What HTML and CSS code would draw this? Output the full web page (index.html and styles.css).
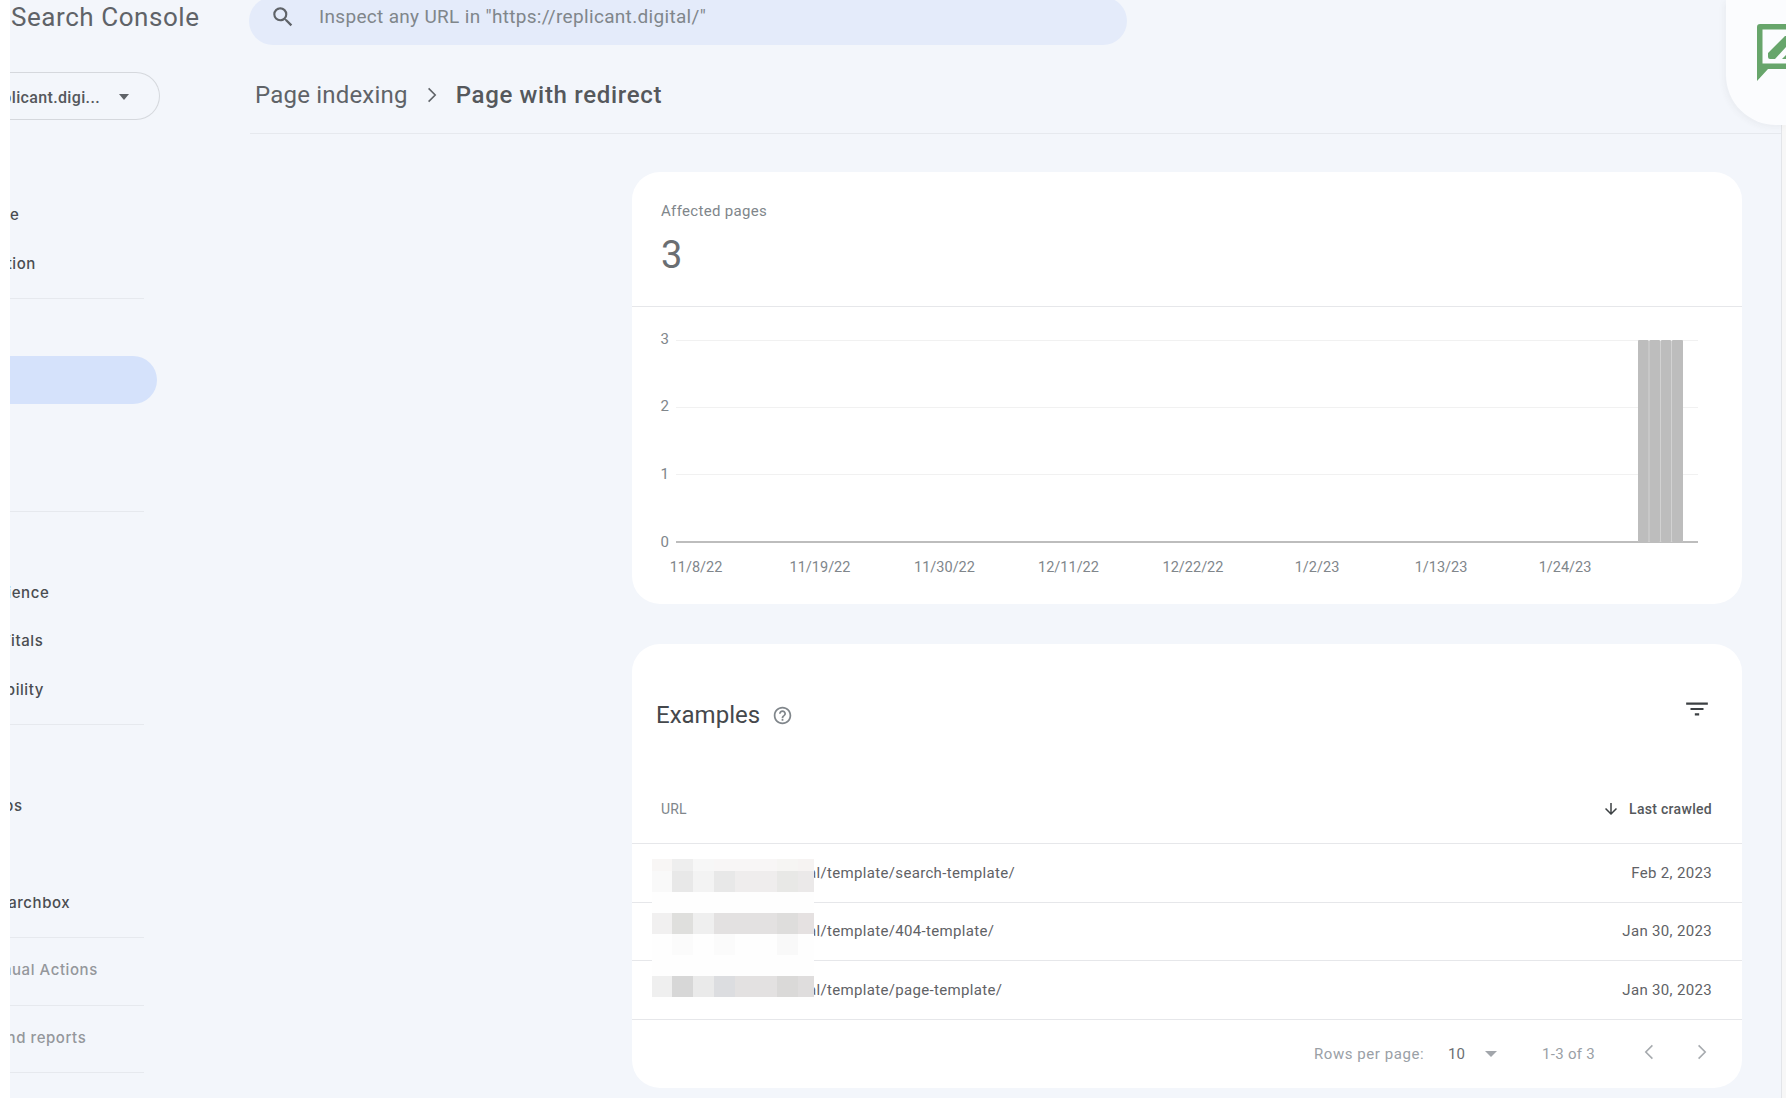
FILE: index.html
```html
<!DOCTYPE html>
<html lang="en">
<head>
<meta charset="utf-8">
<title>Page with redirect - Search Console</title>
<link rel="stylesheet" href="styles.css">
</head>
<body>
<div class="app">
  <aside class="sidebar">
    <div class="brand">Search Console</div>
    <div class="property">
      <span class="property-name">https://replicant.digi...</span>
      <span class="caret caret-dark"></span>
    </div>
    <nav class="nav">
      <div class="group">
        <div class="item">Performance</div>
        <div class="item">URL inspection</div>
      </div>
      <div class="group">
        <div class="item head">Indexing</div>
        <div class="item active">Pages</div>
        <div class="item">Sitemaps</div>
        <div class="item">Removals</div>
      </div>
      <div class="group">
        <div class="item head">Experience</div>
        <div class="item">Page Experience</div>
        <div class="item">Core Web Vitals</div>
        <div class="item">Mobile Usability</div>
      </div>
      <div class="group">
        <div class="item head">Enhancements</div>
        <div class="item">Breadcrumbs</div>
        <div class="item">FAQ</div>
        <div class="item">Sitelinks searchbox</div>
      </div>
      <div class="group">
        <div class="item head muted">Security &amp; Manual Actions</div>
      </div>
      <div class="group">
        <div class="item head muted">Legacy tools and reports</div>
      </div>
    </nav>
  </aside>
  <main class="main">
    <div class="search">
      <svg class="search-icon" viewBox="0 0 24 24"><path d="M15.5 14h-.79l-.28-.27A6.47 6.47 0 0 0 16 9.5 6.5 6.5 0 1 0 9.5 16c1.61 0 3.09-.59 4.23-1.57l.27.28v.79l5 4.99L20.49 19l-4.99-5zm-6 0C7.01 14 5 11.99 5 9.5S7.01 5 9.5 5 14 7.01 14 9.5 11.99 14 9.5 14z"/></svg>
      <span class="search-text">Inspect any URL in "https://replicant.digital/"</span>
    </div>
    <div class="crumbs">
      <span class="crumb">Page indexing</span>
      <svg class="crumb-sep" viewBox="0 0 24 24"><path d="M8.6 5.4 15.2 12l-6.6 6.6" /></svg>
      <span class="crumb current">Page with redirect</span>
    </div>
    <div class="content">
      <section class="card">
        <div class="summary">
          <div class="summary-label">Affected pages</div>
          <div class="summary-value">3</div>
        </div>
        <svg class="chart" viewBox="0 0 1110 297">
          <g class="grid">
            <line x1="44" x2="1066" y1="33.5" y2="33.5"/>
            <line x1="44" x2="1066" y1="100.5" y2="100.5"/>
            <line x1="44" x2="1066" y1="167.5" y2="167.5"/>
          </g>
          <line class="axis" x1="44" x2="1066" y1="235" y2="235"/>
          <rect class="bars-gap" x="1006" y="34" width="45" height="201"/>
          <g class="bars">
            <rect x="1006" y="33" width="10.5" height="202" rx="1"/>
            <rect x="1017.5" y="33" width="10.5" height="202" rx="1"/>
            <rect x="1029" y="33" width="10" height="202" rx="1"/>
            <rect x="1040" y="33" width="11" height="202" rx="1"/>
          </g>
          <g class="y-labels">
            <text x="37" y="37">3</text>
            <text x="37" y="104">2</text>
            <text x="37" y="172">1</text>
            <text x="37" y="240">0</text>
          </g>
          <g class="x-labels">
            <text x="64" y="265">11/8/22</text>
            <text x="188" y="265">11/19/22</text>
            <text x="312.5" y="265">11/30/22</text>
            <text x="436.5" y="265">12/11/22</text>
            <text x="561" y="265">12/22/22</text>
            <text x="685" y="265">1/2/23</text>
            <text x="809" y="265">1/13/23</text>
            <text x="933" y="265">1/24/23</text>
          </g>
        </svg>
      </section>
      <section class="card examples">
        <div class="examples-head">
          <h2 class="examples-title">Examples</h2>
          <svg class="help" viewBox="0 0 24 24"><path d="M11 18h2v-2h-2v2zm1-16C6.48 2 2 6.48 2 12s4.48 10 10 10 10-4.48 10-10S17.52 2 12 2zm0 18c-4.41 0-8-3.59-8-8s3.59-8 8-8 8 3.59 8 8-3.59 8-8 8zm0-14c-2.21 0-4 1.79-4 4h2c0-1.1.9-2 2-2s2 .9 2 2c0 2-3 1.75-3 5h2c0-2.25 3-2.5 3-5 0-2.21-1.79-4-4-4z"/></svg>
          <svg class="filter" viewBox="0 0 24 24"><path d="M10 18h4v-2h-4v2zM2 6v2h20V6H2zm4 7h12v-2H6v2z"/></svg>
        </div>
        <div class="table">
          <div class="row header">
            <span>URL</span>
            <span class="sort">
              <svg class="sort-icon" viewBox="0 0 24 24"><path d="M20 12l-1.41-1.41L13 16.17V4h-2v12.17l-5.58-5.59L4 12l8 8 8-8z"/></svg>
              Last crawled
            </span>
          </div>
          <div class="row"><span>https://replicant.digital/template/search-template/</span><span>Feb 2, 2023</span></div>
          <div class="row"><span>https://replicant.digital/template/404-template/</span><span>Jan 30, 2023</span></div>
          <div class="row"><span>https://replicant.digital/template/page-template/</span><span>Jan 30, 2023</span></div>
          <svg class="mosaic" viewBox="0 0 162 141" shape-rendering="crispEdges">
            <rect x="0" y="0" width="162" height="141" fill="#fefefe"/>
            <rect x="0" y="0" width="20" height="12" fill="#f8f6f5"/><rect x="20" y="0" width="21" height="12" fill="#eeeeee"/><rect x="41" y="0" width="21" height="12" fill="#f7f7f7"/><rect x="62" y="0" width="42" height="12" fill="#f8f6f6"/><rect x="104" y="0" width="21" height="12" fill="#f8f6f6"/><rect x="125" y="0" width="21" height="12" fill="#f6f5f3"/><rect x="146" y="0" width="16" height="12" fill="#f6f3f2"/>
            <rect x="0" y="12" width="20" height="21" fill="#f9f9f9"/><rect x="20" y="12" width="21" height="21" fill="#e8e8e8"/><rect x="41" y="12" width="21" height="21" fill="#f3f3f3"/><rect x="62" y="12" width="21" height="21" fill="#e8e8e8"/><rect x="83" y="12" width="42" height="21" fill="#efeded"/><rect x="125" y="12" width="21" height="21" fill="#e8e8e6"/><rect x="146" y="12" width="16" height="21" fill="#ebe9e9"/>
            <rect x="0" y="54" width="20" height="21" fill="#f1f0f0"/><rect x="20" y="54" width="21" height="21" fill="#dfdfdd"/><rect x="41" y="54" width="21" height="21" fill="#efefef"/><rect x="62" y="54" width="63" height="21" fill="#e3e1e1"/><rect x="125" y="54" width="21" height="21" fill="#dedddc"/><rect x="146" y="54" width="16" height="21" fill="#e5e1e1"/>
            <rect x="20" y="75" width="21" height="21" fill="#fbfbfb"/><rect x="62" y="75" width="21" height="21" fill="#fbfbfb"/><rect x="125" y="75" width="21" height="21" fill="#f9f9f9"/>
            <rect x="0" y="117" width="20" height="21" fill="#efefef"/><rect x="20" y="117" width="21" height="21" fill="#d7d7d7"/><rect x="41" y="117" width="21" height="21" fill="#eaeaea"/><rect x="62" y="117" width="21" height="21" fill="#dcdde0"/><rect x="83" y="117" width="42" height="21" fill="#e3e1e1"/><rect x="125" y="117" width="21" height="21" fill="#dad9d8"/><rect x="146" y="117" width="16" height="21" fill="#dfdddd"/>
          </svg>
        </div>
        <div class="pager">
          <span class="rows-label">Rows per page:</span>
          <span class="rows-value">10</span>
          <span class="caret caret-light"></span>
          <span class="range">1-3 of 3</span>
          <svg class="page-btn" viewBox="0 0 24 24"><path d="M15.4 5.4 8.8 12l6.6 6.6"/></svg>
          <svg class="page-btn" viewBox="0 0 24 24"><path d="M8.6 5.4 15.2 12l-6.6 6.6"/></svg>
        </div>
      </section>
    </div>
  </main>
  <div class="scrollbar"></div>
</div>
<div class="side-panel">
  <svg class="feedback" viewBox="0 0 29 57"><path fill-rule="evenodd" d="M0 3Q0 0 3 0H29V45H11L0 57ZM5.5 5.5V39.5H29V5.5Z"/><path d="M11 29 28 12H29V23L18 35H13Q11 35 11 33ZM25 35 29 31V35Z"/></svg>
</div>
</body>
</html>
```

FILE: styles.css
```css
* { box-sizing: border-box; }
html, body { margin: 0; height: 1102px; overflow: hidden; background: #fff; }
body { font-family: Roboto, "Liberation Sans", sans-serif; color: #3c4043; }

.app {
  display: flex;
  margin-left: 10px;
  height: 1098px;
  background: #f3f6fb;
  overflow: hidden;
}

/* Sidebar: scrolled off the left edge of the photographed window */
.sidebar { flex: 0 0 239px; overflow: hidden; }
.brand {
  height: 34px;
  padding-left: 1px;
  line-height: 34px;
  font-size: 26px;
  letter-spacing: 0.55px;
  color: #5f6368;
  white-space: nowrap;
}
.property {
  display: flex;
  align-items: center;
  justify-content: flex-end;
  gap: 19px;
  width: 150px;
  height: 48px;
  margin-top: 38px;
  padding: 2px 30px 0 0;
  border: 1px solid #d5d8dd;
  border-left: 0;
  border-radius: 0 24px 24px 0;
  overflow: hidden;
}
.property-name { font-size: 16px; font-weight: 500; letter-spacing: 0.35px; color: #55585c; white-space: nowrap; }
.caret { width: 0; height: 0; border-style: solid; border-color: transparent; border-bottom-width: 0; }
.caret-dark { flex: none; border-width: 6px 5.5px 0; border-top-color: #5f6368; }
.caret-light { flex: none; border-width: 6.5px 6.5px 0; border-top-color: #a2a6ab; }

.nav { width: 237px; margin-left: -90px; margin-top: 63px; }
.group { margin-right: 13.5px; padding: 8px 0 10px; border-bottom: 1px solid #e6e9ee; }
.item {
  height: 48.5px;
  line-height: 48.5px;
  font-family: Inter, Roboto, sans-serif;
  font-size: 15px;
  font-weight: 500;
  letter-spacing: 0.57px;
  color: #4a4d51;
  white-space: nowrap;
}
.item.head { margin-left: -25px; }
.item.muted { color: #94979b; }
.item.active { margin-right: -13.5px; background: #d5e2fb; border-radius: 0 24px 24px 0; }

/* Main column */
.main { flex: 1; min-width: 0; }
.search {
  display: flex;
  align-items: center;
  width: 878px;
  height: 48px;
  margin-top: -3px;
  padding-left: 21px;
  gap: 23px;
  background: #e4ebfa;
  border-radius: 24px;
}
.search-icon { width: 26px; height: 26px; fill: #5f6368; margin-top: -9px; }
.search-text { font-size: 19px; letter-spacing: 0.32px; color: #80868b; margin-top: -9px; }
.crumbs {
  display: flex;
  align-items: center;
  height: 77px;
  margin-top: 12px;
  margin-left: 1px;
  padding: 0 0 1px 5px;
  border-bottom: 1px solid #e6e9ee;
}
.crumb { font-size: 24px; letter-spacing: 0.2px; color: #5f6368; }
.crumb.current { font-weight: 500; letter-spacing: 0.68px; color: #55585c; }
.crumb-sep { width: 24px; height: 24px; margin: 0 12px 0 12px; fill: none; stroke: #5f6368; stroke-width: 1.6; }

.content { padding: 38px 39px 0 383px; }
.card { background: #fff; border-radius: 28px; }
.examples { position: relative; margin-top: 40px; height: 444px; }

.summary { height: 135px; padding: 27px 29px 0; border-bottom: 1px solid #e6e7ea; }
.summary-label { font-size: 15px; line-height: 24px; letter-spacing: 0.32px; color: #80868b; }
.summary-value { font-size: 38px; line-height: 48px; margin-top: 8px; color: #6a6e72; }

.chart { display: block; width: 1110px; height: 297px; }
.grid line { stroke: #f1f1f1; stroke-width: 1; }
.axis { stroke: #bdbdbd; stroke-width: 2; }
.bars rect { fill: #bdbdbd; }
.bars-gap { fill: #d2d2d2; }
.y-labels text { font-size: 15px; fill: #80868b; text-anchor: end; }
.x-labels text { font-size: 14.5px; fill: #80868b; text-anchor: middle; }

.examples-head { display: flex; align-items: flex-start; height: 131px; padding: 53px 32px 0 24px; }
.examples-title { margin: 0; font-size: 24px; line-height: 36px; font-weight: 400; color: #45484c; }
.help { width: 21px; height: 21px; margin: 8px 0 0 12px; fill: #80868b; }
.filter { width: 26px; height: 26px; margin: -1px 0 0 auto; fill: #3c4043; }

.table { position: relative; }
.row {
  display: flex;
  align-items: center;
  justify-content: space-between;
  height: 58.5px;
  padding: 0 30px 0 29px;
  font-size: 15px;
  letter-spacing: 0.33px;
  color: #5f6266;
  border-bottom: 1px solid #e6e7ea;
}
.row.header { height: 69px; font-size: 14px; letter-spacing: 0.1px; color: #80868b; padding-bottom: 1px; }
.sort { display: flex; align-items: center; gap: 9px; font-weight: 500; letter-spacing: 0.3px; color: #55585c; }
.sort-icon { width: 18px; height: 18px; fill: #3c4043; }
.mosaic { position: absolute; left: 20px; top: 84px; width: 162px; height: 141px; }

.pager {
  display: flex;
  align-items: center;
  justify-content: flex-end;
  height: 68px;
  padding-right: 28px;
  font-size: 15px;
  color: #9aa0a6;
}
.rows-label { letter-spacing: 0.55px; }
.rows-value { margin-left: 24px; color: #6b6f73; }
.caret-light { margin-left: 20px; }
.range { margin-left: 45px; letter-spacing: 0.3px; }
.page-btn { width: 24px; height: 24px; margin-left: 29px; fill: none; stroke: #a6aaae; stroke-width: 1.6; margin-top: -3px; }
.range + .page-btn { margin-left: 42px; }

.scrollbar { flex: 0 0 5px; background: #f7f7f7; border-left: 1px solid #e3e5e9; }

/* Floating help panel over the top right corner */
.side-panel {
  position: absolute;
  top: 0;
  right: 0;
  width: 60px;
  height: 125px;
  background: #fbfcfe;
  border-radius: 0 0 0 50px;
  box-shadow: -2px 2px 6px rgba(60, 64, 67, 0.05);
  overflow: hidden;
}
.feedback { position: absolute; left: 31px; top: 24px; width: 29px; height: 57px; fill: #67a56b; }
```
